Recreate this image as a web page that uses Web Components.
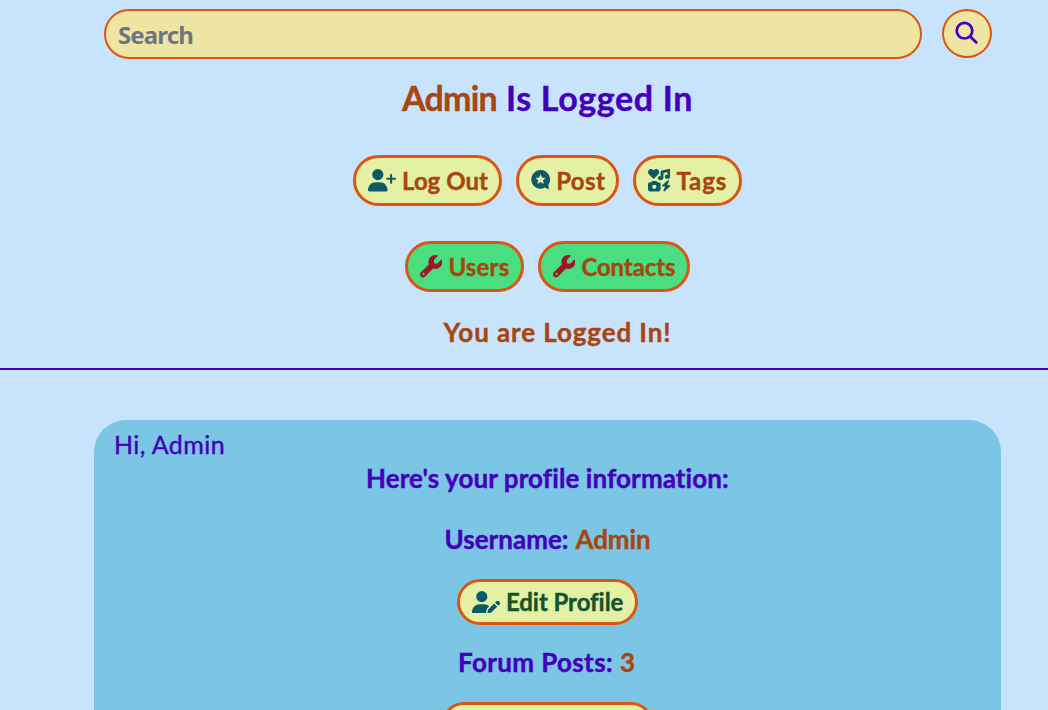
<!DOCTYPE html>
<html lang="en">
<head>
<meta charset="utf-8">
<title>Profile</title>
<style>
html,body{margin:0;height:710px;overflow:hidden;background:#c8e4fd}
body{font-family:Lato,"Noto Sans",sans-serif;font-weight:700;-webkit-text-stroke:.4px currentColor;
--purple:#4400bc;--rust:#a9450f;--edge:#dd5515;--teal:#0c5968}
</style>
</head>
<body>
<profile-page></profile-page>
<script>
const ICONS={
userPlus:['0 0 640 512','<path d="M96 128a128 128 0 1 1 256 0A128 128 0 1 1 96 128zM0 482.3C0 383.8 79.8 304 178.3 304l91.4 0C368.2 304 448 383.8 448 482.3c0 16.4-13.3 29.7-29.7 29.7L29.7 512C13.3 512 0 498.7 0 482.3zM504 312l0-64-64 0c-13.3 0-24-10.7-24-24s10.7-24 24-24l64 0 0-64c0-13.3 10.7-24 24-24s24 10.7 24 24l0 64 64 0c13.3 0 24 10.7 24 24s-10.7 24-24 24l-64 0 0 64c0 13.3-10.7 24-24 24s-24-10.7-24-24z"/>'],
userPen:['0 0 640 512','<path d="M224 256A128 128 0 1 0 224 0a128 128 0 1 0 0 256zm-45.7 48C79.8 304 0 383.8 0 482.3C0 498.7 13.3 512 29.7 512l293.1 0c-3.1-8.8-3.7-18.4-1.4-27.8l15-60.1c2.8-11.3 8.6-21.5 16.8-29.7l40.3-40.3c-32.1-31-75.7-50.1-123.9-50.1l-91.4 0zm435.5-68.3c-15.6-15.6-40.9-15.6-56.6 0l-29.4 29.4 71 71 29.4-29.4c15.6-15.6 15.6-40.9 0-56.6l-14.4-14.4zM375.9 417c-4.1 4.1-7 9.2-8.4 14.9l-15 60.1c-1.4 5.5 .2 11.2 4.2 15.2s9.7 5.6 15.2 4.2l60.1-15c5.6-1.4 10.8-4.3 14.9-8.4L576.1 358.7l-71-71L375.9 417z"/>'],
wrench:['0 0 512 512','<path d="M352 320c88.4 0 160-71.6 160-160c0-15.3-2.2-30.1-6.2-44.2c-3.1-10.8-16.4-13.2-24.3-5.3l-76.8 76.8c-3 3-7.1 4.7-11.3 4.7L336 192c-8.8 0-16-7.2-16-16l0-57.4c0-4.2 1.7-8.3 4.7-11.3l76.8-76.8c7.9-7.9 5.4-21.2-5.3-24.3C382.1 2.2 367.3 0 352 0C263.6 0 192 71.6 192 160c0 19.1 3.4 37.5 9.5 54.5L19.9 396.1C7.2 408.8 0 426.1 0 444.1C0 481.6 30.4 512 67.9 512c18 0 35.3-7.2 48-19.9L297.5 310.5c17 6.2 35.4 9.5 54.5 9.5zM80 408a24 24 0 1 1 0 48 24 24 0 1 1 0-48z"/>'],
icons:['0 0 512 512','<path d="M500.3 7.3C507.7 13.3 512 22.4 512 32l0 144c0 26.5-28.7 48-64 48s-64-21.5-64-48s28.7-48 64-48l0-57L352 90.2 352 208c0 26.5-28.7 48-64 48s-64-21.5-64-48s28.7-48 64-48l0-96c0-15.3 10.8-28.4 25.7-31.4l160-32c9.4-1.9 19.1 .6 26.6 6.6zM74.7 304l11.8-17.8c5.9-8.9 15.9-14.2 26.6-14.2l61.7 0c10.7 0 20.7 5.3 26.6 14.2L213.3 304l26.7 0c26.5 0 48 21.5 48 48l0 112c0 26.5-21.5 48-48 48L48 512c-26.5 0-48-21.5-48-48L0 352c0-26.5 21.5-48 48-48l26.7 0zM192 408a48 48 0 1 0 -96 0 48 48 0 1 0 96 0zM478.7 278.3L440.3 368l55.7 0c6.7 0 12.6 4.1 15 10.4s.6 13.3-4.4 17.7l-128 112c-5.6 4.9-13.9 5.3-19.9 .9s-8.2-12.4-5.3-19.2L391.7 400 336 400c-6.7 0-12.6-4.1-15-10.4s-.6-13.3 4.4-17.7l128-112c5.6-4.9 13.9-5.3 19.9-.9s8.2 12.4 5.3 19.2zm-339-59.2c-6.5 6.5-17 6.5-23 0L19.9 119.2c-28-29-26.5-76.9 5-103.9c27-23.5 68.4-19 93.4 6.5l10 10.5 9.5-10.5c25-25.5 65.9-30 93.9-6.5c31 27 32.5 74.9 4.5 103.9l-96.4 99.9z"/>'],
star:['0 0 19.2 22.4','<path fill-rule="evenodd" d="M9.6 1.1a9.3 9.3 0 1 0 4.4 17.5l3.8 2-.4-5A9.3 9.3 0 0 0 9.6 1.1zM9.6 5.2l1.5 3.3 3.6.4-2.7 2.4.8 3.6-3.2-1.8-3.2 1.8.8-3.6-2.7-2.4 3.6-.4z"/>'],
search:['0 0 24 24','<g fill="none" stroke="currentColor" stroke-width="2.7" stroke-linecap="round"><circle cx="9.5" cy="9.7" r="7.8"/><path d="M15.3 15.5L21.3 21.5"/></g>']
};
class UiIcon extends HTMLElement{
 connectedCallback(){
  const [box,body]=ICONS[this.getAttribute('name')];
  const [, ,w,h]=box.split(' ').map(Number);
  const high=+(this.getAttribute('size')||22.4);
  this.attachShadow({mode:'open'}).innerHTML=`<style>:host{display:block;flex:none}svg{display:block;fill:currentColor}</style><svg viewBox="${box}" width="${w/h*high}" height="${high}">${body}</svg>`;
 }
}
customElements.define('ui-icon',UiIcon);

/* Tracks its text out or in so that it fills the given width. */
class FitText extends HTMLElement{
 connectedCallback(){
  this.attachShadow({mode:'open'}).innerHTML=`<style>:host{display:inline-block;white-space:nowrap;width:${this.getAttribute('width')}px}span{display:inline-block}</style><span><slot></slot></span>`;
  const span=this.shadowRoot.querySelector('span');
  const n=this.textContent.length;
  const gap=+this.getAttribute('width')-span.getBoundingClientRect().width;
  span.style.letterSpacing=(gap/n)+'px';
 }
}
customElements.define('fit-text',FitText);

class PillButton extends HTMLElement{
 connectedCallback(){
  this.attachShadow({mode:'open'}).innerHTML=`<style>
  :host{display:block;flex:none}
  button{all:unset;box-sizing:border-box;display:flex;align-items:center;width:100%;height:var(--pill-height,51px);padding:0 12px;border:3px solid var(--edge);border-radius:26px;background:var(--pill-fill,#e4f1a4);font-size:24px;line-height:30px;color:var(--pill-text,var(--rust))}
  ui-icon{margin-right:6px;color:var(--pill-icon,var(--teal))}
  </style><button><ui-icon name="${this.getAttribute('icon')}"></ui-icon><slot></slot></button>`;
  this.style.width=this.getAttribute('width')+'px';
 }
}
customElements.define('pill-button',PillButton);

class SearchBar extends HTMLElement{
 connectedCallback(){
  this.attachShadow({mode:'open'}).innerHTML=`<style>
  :host{display:flex;gap:20px;align-items:flex-start}
  .field,.go{box-sizing:border-box;border:2px solid var(--edge);background:#efe5a2}
  .field{width:818px;height:50px;border-radius:25px;padding:0 0 0 12px;font:700 24px/48px "Noto Sans","Open Sans",sans-serif;color:#6b7680;-webkit-text-stroke:0}
  .go{width:50px;height:49px;border-radius:50%;display:flex;align-items:center;justify-content:center;color:var(--purple);padding:0 0 2px 0}
  </style><div class="field"><fit-text width="75">Search</fit-text></div><div class="go"><ui-icon name="search" size="24"></ui-icon></div>`;
 }
}
customElements.define('search-bar',SearchBar);

class SiteHeader extends HTMLElement{
 connectedCallback(){
  this.attachShadow({mode:'open'}).innerHTML=`<style>
  :host{display:block;border-bottom:2px solid var(--purple);padding:9px 47px 16px 94px;color:var(--purple)}
  search-bar{margin-left:10px}
  h1{margin:19px 0 0;font-size:34px;line-height:40px;display:flex;justify-content:center;gap:9px}
  .rust{color:var(--rust)}
  nav{display:flex;justify-content:center;gap:14px;margin-top:37px}
  nav.admin{margin-top:35px;--pill-fill:#49de80;--pill-icon:#9b1729}
  p{margin:20px 0 0 20px;text-align:center;font-size:26px;line-height:40px;color:var(--rust)}
  </style>
  <search-bar></search-bar>
  <h1><fit-text class="rust" width="95">Admin</fit-text><fit-text width="187">Is Logged In</fit-text></h1>
  <nav>
   <pill-button icon="userPlus" width="149"><fit-text width="86">Log Out</fit-text></pill-button>
   <pill-button icon="star" width="103"><fit-text width="49">Post</fit-text></pill-button>
   <pill-button icon="icons" width="109"><fit-text width="51">Tags</fit-text></pill-button>
  </nav>
  <nav class="admin">
   <pill-button icon="wrench" width="119"><fit-text width="61">Users</fit-text></pill-button>
   <pill-button icon="wrench" width="152"><fit-text width="94">Contacts</fit-text></pill-button>
  </nav>
  <p><fit-text width="228">You are Logged In!</fit-text></p>`;
 }
}
customElements.define('site-header',SiteHeader);

class MorePill extends HTMLElement{
 connectedCallback(){
  this.attachShadow({mode:'open'}).innerHTML=`<style>:host{display:block;flex:none;box-sizing:border-box;width:213px;height:46px;border:3px solid var(--edge);border-radius:23px;background:#e4f1a4}</style>`;
 }
}
customElements.define('more-pill',MorePill);

class ProfileCard extends HTMLElement{
 connectedCallback(){
  this.attachShadow({mode:'open'}).innerHTML=`<style>
  :host{display:flex;flex-direction:column;align-items:center;box-sizing:border-box;height:340px;margin:50px 47px 0 94px;padding-top:9px;border-radius:32px;background:#7ac6e4;color:var(--purple);font-size:26px;line-height:30px;--pill-height:46px}
  .hi{align-self:flex-start;margin-left:20px;font-size:25px;font-weight:400}
  .row{display:flex;gap:7px}
  .rust{color:var(--rust)}
  .intro{margin-top:4px}.name{margin-top:31px}.edit{margin-top:25px;--pill-text:#14532d}.posts{margin-top:22px}.view{margin-top:25px}
  </style>
  <div class="hi"><fit-text width="111">Hi, Admin</fit-text></div>
  <div class="intro"><fit-text width="363">Here's your profile information:</fit-text></div>
  <div class="row name"><fit-text width="124">Username:</fit-text><fit-text class="rust" width="75">Admin</fit-text></div>
  <pill-button class="edit" icon="userPen" width="181"><fit-text width="117">Edit Profile</fit-text></pill-button>
  <div class="row posts"><fit-text width="155">Forum Posts:</fit-text><fit-text class="rust" width="17">3</fit-text></div>
  <more-pill class="view"></more-pill>`;
 }
}
customElements.define('profile-card',ProfileCard);

class ProfilePage extends HTMLElement{
 connectedCallback(){
  this.attachShadow({mode:'open'}).innerHTML=`<style>:host{display:block;height:710px;overflow:hidden}</style><site-header></site-header><profile-card></profile-card>`;
 }
}
customElements.define('profile-page',ProfilePage);
</script>
</body>
</html>
